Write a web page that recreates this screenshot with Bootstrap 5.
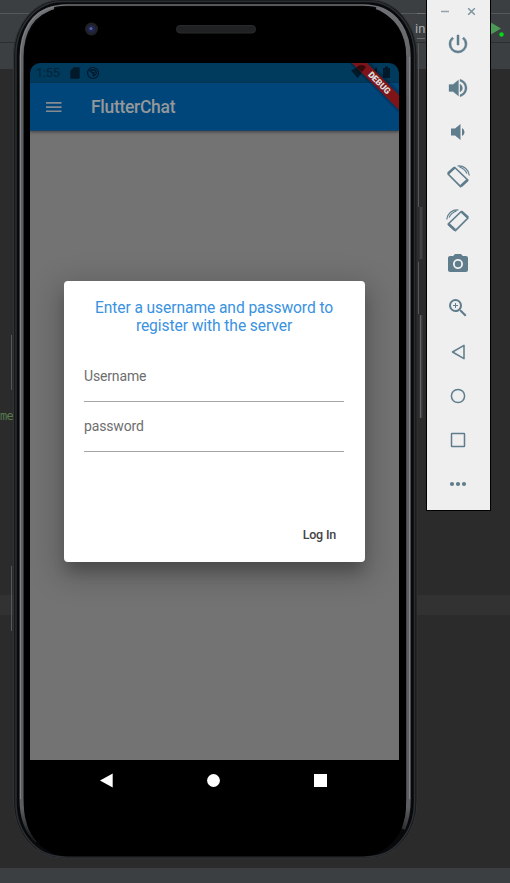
<!DOCTYPE html>
<html lang="en">
<head>
<meta charset="utf-8">
<meta name="viewport" content="width=device-width, initial-scale=1">
<title>FlutterChat</title>
<link href="https://cdn.jsdelivr.net/npm/bootstrap@5.3.0/dist/css/bootstrap.min.css" rel="stylesheet">
<style>
body{font-family:Roboto,"Liberation Sans",sans-serif;background:#2b2b2b}
.desktop{width:510px;height:883px;background:#2b2b2b}
.ide-top{height:69px;background:#3c3f41}
.ide-top .rule-a{height:14px;border-bottom:1px solid #55585a}
.ide-top .rule-b{height:29px;border-bottom:1px solid #2c2e2f}
.ide-code{height:526px}
.ide-line{height:20px;background:#323232}
.ide-foot{height:15px;background:#3c3f41}
.code-me{left:0;top:408px;font:12px/16px "DejaVu Sans Mono","Liberation Mono",monospace;color:#567a4d;letter-spacing:-.8px}
.tab-in{left:415px;top:21px;font-size:13px;line-height:16px;color:#a9acae}
.phone{left:0;top:0;width:425px;height:870px}
.screen{left:30px;top:63px;width:369px;height:738px;border-radius:10px 10px 8px 8px;background:#000}
.statusbar{height:20px;background:#003a5c;color:#02243a;font-size:13px;padding:0 6px 0 6px}
.statusbar span{letter-spacing:-.3px}
.appbar{height:48px;background:#00467a;color:#94989b;padding-left:16px;box-shadow:0 1px 3px rgba(0,0,0,.45);position:relative;border-bottom:1px solid #17456a}
.appbar-title{font-size:17.5px;font-weight:500;margin-left:29px;line-height:20px;letter-spacing:-.3px}
.page-body{height:629px;background:#737373;padding-top:150px}
.dialog-box{width:301px;height:281px;background:#fff;border-radius:4px;margin-left:34px;padding:18px 21px 20px 20px;box-shadow:0 9px 30px 7px rgba(0,0,0,.2),0 12px 14px -3px rgba(0,0,0,.2)}
.dialog-title{font-size:15.6px;line-height:18px;color:#3a92e0;white-space:nowrap;letter-spacing:-.08px}
.field{height:50px;border-bottom:1px solid #a5a5a5;font-size:14px;line-height:16px;color:#6e6e6e;padding-top:16px;letter-spacing:-.15px}
.first-field{margin-top:17px}
.login{font-size:12.5px;font-weight:500;line-height:14px;color:#444;margin-right:8px;letter-spacing:-.2px}
.sysbar{height:41px;padding:0 72px 0 70px}
.ribbon{right:0;top:0;width:52px;height:52px}
.toolbar-win{left:426px;top:0;width:65px;height:511px;background:#efefef;border:1px solid #000;border-top:0}
.win-btns{height:22px;padding:0 14px 0 13px}
.tool{height:44px;padding-right:2px}
.tool svg{fill:#5f7d8c}
.run-icon{left:490px;top:18px}
</style>
<script src="https://cdn.jsdelivr.net/npm/bootstrap@5.3.0/dist/js/bootstrap.bundle.min.js"></script>
</head>
<body class="m-0 overflow-hidden">
<div class="desktop position-relative overflow-hidden">
  <div class="d-flex flex-column h-100">
    <div class="ide-top"><div class="rule-a"></div><div class="rule-b"></div></div>
    <div class="ide-code"></div>
    <div class="ide-line"></div>
    <div class="flex-grow-1"></div>
    <div class="ide-foot"></div>
  </div>
  <div class="code-me position-absolute">me</div>
  <div class="tab-in position-absolute">in</div>
  <svg class="run-icon position-absolute" width="20" height="22"><path d="M0 4 11 10.500 0 17Z" fill="#4b9a55"/><circle cx="11.500" cy="16.500" r="2.200" fill="#00dc16"/></svg>

  <div class="phone position-absolute">
    <svg class="position-absolute top-0 start-0" width="425" height="870" fill="none">
      <defs>
        <linearGradient id="rim" gradientUnits="userSpaceOnUse" x1="0" y1="0" x2="0" y2="850"><stop offset="0" stop-color="#707275"/><stop offset=".12" stop-color="#5c5e62"/><stop offset=".95" stop-color="#5c5e62"/><stop offset=".985" stop-color="#1b1c1e"/></linearGradient>
      </defs>
      <path d="M11.500 335v55M11.500 566v65M418.500 43v164M418.500 262v52" stroke="#555759"/>
      <path d="M417 13.500h9M417 38.500h9" stroke="#6d6f71"/>
      <rect x="13.500" y="-.5" width="403.500" height="858.500" rx="48" ry="56" fill="#17181a" stroke="#303234"/>
      <rect x="16" y="1.500" width="398.500" height="855" rx="46" ry="54" fill="#08090a" stroke="#2b2f33" stroke-width="1.500"/>
      <path d="M21.500 799V57C21.500 25 37 5 67 5H363C393 5 408.500 25 408.500 57V799" stroke="#707275" stroke-width="1.500"/>
      <path d="M37 841C27 832 21.500 818 21.500 799V57C21.500 31 33 12 54 8" stroke="url(#rim)" stroke-width="4"/>
      <path d="M376 9C397 13 408.500 33 408.500 57V799C408.500 811 407 820 403 829" stroke="url(#rim)" stroke-width="4.500"/>
      <path d="M20.500 799V57C20.500 31 33 11 54 7M409.500 57V799" stroke="#808285"/>
      <rect x="24" y="6.500" width="382" height="850" rx="44" ry="50" fill="#000"/>
      <path d="M421 207v52M421 315v103" stroke="#3f4143" stroke-width="3"/>
      <path d="M420.500 315v103" stroke="#606264"/>
      <circle cx="91.500" cy="29" r="6.500" fill="#202124"/><circle cx="91.500" cy="29" r="4" fill="#20254a"/><circle cx="91" cy="28.500" r="1.500" fill="#5960a5"/>
      <rect x="176.500" y="25.500" width="79" height="7.500" rx="3.500" fill="#202122" stroke="#292a2b"/>
    </svg>
    <div class="screen position-absolute overflow-hidden">
      <div class="statusbar d-flex align-items-center">
        <span>1:55</span>
        <svg class="ms-2" width="14" height="14" viewBox="0 0 24 24" fill="#02192a"><path d="M18 2h-8L4 8v12c0 1.100.9 2 2 2h12c1.100 0 2-.9 2-2V4c0-1.100-.9-2-2-2z"/></svg>
        <svg class="ms-1" width="14" height="14" viewBox="0 0 14 14" fill="none" stroke="#02192a"><circle cx="7" cy="7" r="5.500" stroke-width="1.200"/><path d="M4 5C5 3.500 9 3 10 5.500S9 10 6.500 9.500M3.500 4 8.500 9M6 6.500 8.500 6.700" stroke-width="1.300"/></svg>
        <svg class="ms-auto" width="42" height="14" fill="#02192a"><path d="M0 4.500Q6.500-.5 13 4.500L6.500 12Z M26 1v11H15Z M32 2h2V.5h3V2h2v10h-7Z"/></svg>
      </div>
      <div class="appbar d-flex align-items-center">
        <svg width="16" height="12" fill="#858b90"><path d="M0 1h15.500v1.700H0zM0 5.200h15.500v1.700H0zM0 9.400h15.500v1.700H0z"/></svg>
        <div class="appbar-title">FlutterChat</div>
      </div>
      <div class="page-body">
        <div class="dialog-box d-flex flex-column">
          <div class="dialog-title text-center">Enter a username and password to<br>register with the server</div>
          <div class="field first-field">Username</div>
          <div class="field">password</div>
          <div class="login mt-auto align-self-end">Log In</div>
        </div>
      </div>
      <div class="sysbar d-flex align-items-center justify-content-between">
        <svg width="13" height="15" fill="#fff"><path d="M0 7.500 12.700.5v14Z"/></svg>
        <svg width="13" height="13" fill="#fff"><circle cx="6.500" cy="6.500" r="6.400"/></svg>
        <svg width="13" height="13" fill="#fff"><path d="M0 0h13v13H0z"/></svg>
      </div>
      <svg class="ribbon position-absolute" viewBox="0 0 52 52">
        <path d="M2 0H24L52 28V50Z" fill="#000" opacity=".18"/>
        <path d="M5 0H20L52 32V47Z" fill="#7e1418"/>
        <path d="M9 4.500Q15 0 19 4L15 9Z" fill="#35090b"/>
        <text transform="translate(32.300 19.800) rotate(45)" text-anchor="middle" y="3" font-family="Roboto, sans-serif" font-size="8.800" font-weight="900" letter-spacing="-.1" fill="#ddd">DEBUG</text>
      </svg>
    </div>
  </div>

  <div class="toolbar-win position-absolute d-flex flex-column">
    <div class="win-btns d-flex align-items-center justify-content-between">
      <svg width="9" height="9" stroke="#92a2aa" stroke-width="1.500"><path d="M1 4.500h8"/></svg>
      <svg width="9" height="9" stroke="#78909c" stroke-width="1.400"><path d="m1.200 1.200 6.600 6.600m0-6.600L1.200 7.800"/></svg>
    </div>
    <div class="tool d-flex align-items-center justify-content-center"><svg width="24" height="24" viewBox="0 0 24 24"><path d="M13 3h-2v10h2V3zm4.830 2.170-1.420 1.420A6.920 6.920 0 0 1 19 12c0 3.870-3.130 7-7 7A6.995 6.995 0 0 1 7.580 6.580L6.170 5.170A8.932 8.932 0 0 0 3 12a9 9 0 0 0 18 0c0-2.740-1.230-5.180-3.170-6.830z" stroke="#5f7d8c" stroke-width=".5"/></svg></div>
    <div class="tool d-flex align-items-center justify-content-center"><svg width="24" height="24" viewBox="0 0 24 24"><path d="M3 8.500v7h4l5.500 4.500V4L7 8.500H3zm13.500 3.500A4.500 4.500 0 0 0 14 7.970v8.050c1.480-.73 2.500-2.250 2.500-4.020zM14 3.230v2.060c2.890.86 5 3.540 5 6.710s-2.110 5.850-5 6.710v2.060c4.010-.91 7-4.490 7-8.770s-2.990-7.860-7-8.770z" stroke="#5f7d8c" stroke-width=".3"/></svg></div>
    <div class="tool d-flex align-items-center justify-content-center"><svg width="24" height="24" viewBox="0 0 24 24"><path d="M5 8.500v7h4l5.500 4.500V4L9 8.500H5zm13.500 3.500A4.500 4.500 0 0 0 16 7.970v8.050c1.480-.73 2.500-2.250 2.500-4.020z"/></svg></div>
    <div class="tool d-flex align-items-center justify-content-center"><svg width="24" height="24" viewBox="0 0 24 24"><g fill="none" stroke="#5f7d8c"><path d="M2 10 8.800 3.500 21.800 16 14.600 22.600Z" stroke-width="1.700" stroke-linejoin="round"/><path d="M2 9.500 8.500 3.600M15 22 21.500 16" stroke-width="2.600"/><path d="M11.500 2C18 1.500 22.500 5.500 23.300 11.500M13.500 3C17 4 19.500 6.500 21 9.500" stroke-width="1.200"/></g></svg></div>
    <div class="tool d-flex align-items-center justify-content-center"><svg width="24" height="24" viewBox="0 0 24 24"><g fill="none" stroke="#5f7d8c"><path d="M22 10 15.200 3.500 2.200 16 9.400 22.600Z" stroke-width="1.700" stroke-linejoin="round"/><path d="M22 9.500 15.500 3.600M9 22 2.500 16" stroke-width="2.600"/><path d="M12.500 2C6 1.500 1.500 5.500.7 11.500M10.500 3C7 4 4.500 6.500 3 9.500" stroke-width="1.200"/></g></svg></div>
    <div class="tool d-flex align-items-center justify-content-center"><svg width="24" height="24" viewBox="0 0 24 24"><circle cx="12" cy="12" r="3.200"/><path d="M9 2 7.170 4H4c-1.100 0-2 .9-2 2v12c0 1.100.9 2 2 2h16c1.100 0 2-.9 2-2V6c0-1.100-.9-2-2-2h-3.170L15 2H9zm3 15c-2.760 0-5-2.240-5-5s2.240-5 5-5 5 2.240 5 5-2.240 5-5 5z"/></svg></div>
    <div class="tool d-flex align-items-center justify-content-center"><svg width="24" height="24" viewBox="0 0 24 24"><path d="M15.500 14h-.79l-.28-.27A6.471 6.471 0 0 0 16 9.500 6.500 6.500 0 1 0 9.500 16c1.610 0 3.090-.59 4.230-1.570l.27.28v.79l5 4.990L20.490 19l-4.990-5zm-6 0C7.010 14 5 11.990 5 9.500S7.010 5 9.500 5 14 7.010 14 9.500 11.990 14 9.500 14zm2.500-4h-2v2H9v-2H7V9h2V7h1v2h2v1z"/></svg></div>
    <div class="tool d-flex align-items-center justify-content-center"><svg width="24" height="24" viewBox="0 0 24 24"><path d="M6.500 12 18 5.300v13.400Z" style="fill:none" stroke="#5f7d8c" stroke-width="1.500" stroke-linejoin="round"/></svg></div>
    <div class="tool d-flex align-items-center justify-content-center"><svg width="24" height="24" viewBox="0 0 24 24"><circle cx="12" cy="12" r="6.600" style="fill:none" stroke="#5f7d8c" stroke-width="1.500"/></svg></div>
    <div class="tool d-flex align-items-center justify-content-center"><svg width="24" height="24" viewBox="0 0 24 24"><rect x="5.500" y="5.500" width="13" height="13" rx=".5" style="fill:none" stroke="#5f7d8c" stroke-width="1.500"/></svg></div>
    <div class="tool d-flex align-items-center justify-content-center"><svg width="24" height="24" viewBox="0 0 24 24"><circle cx="6" cy="12" r="2.100"/><circle cx="12" cy="12" r="2.100"/><circle cx="18" cy="12" r="2.100"/></svg></div>
  </div>
</div>
</body>
</html>
